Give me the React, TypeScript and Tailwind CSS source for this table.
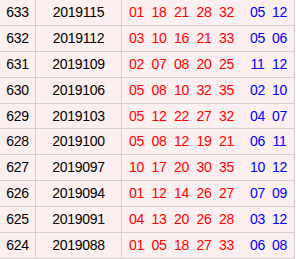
const rows: { id: string; date: string; red: string[]; blue: string[] }[] = [
  { id: '633', date: '2019115', red: ['01', '18', '21', '28', '32'], blue: ['05', '12'] },
  { id: '632', date: '2019112', red: ['03', '10', '16', '21', '33'], blue: ['05', '06'] },
  { id: '631', date: '2019109', red: ['02', '07', '08', '20', '25'], blue: ['11', '12'] },
  { id: '630', date: '2019106', red: ['05', '08', '10', '32', '35'], blue: ['02', '10'] },
  { id: '629', date: '2019103', red: ['05', '12', '22', '27', '32'], blue: ['04', '07'] },
  { id: '628', date: '2019100', red: ['05', '08', '12', '19', '21'], blue: ['06', '11'] },
  { id: '627', date: '2019097', red: ['10', '17', '20', '30', '35'], blue: ['10', '12'] },
  { id: '626', date: '2019094', red: ['01', '12', '14', '26', '27'], blue: ['07', '09'] },
  { id: '625', date: '2019091', red: ['04', '13', '20', '26', '28'], blue: ['03', '12'] },
  { id: '624', date: '2019088', red: ['01', '05', '18', '27', '33'], blue: ['06', '08'] },
];

function Ball({ n, blue }: { n: string; blue?: boolean }) {
  return (
    <span className={`inline-block w-[15px] text-center ${blue ? 'text-[#0000ff]' : 'text-[#ff0000]'}`}>{n}</span>
  );
}

export default function App() {
  return (
    <div className="w-[296px] h-[259px] overflow-hidden bg-white">
      <div
        className="w-[295px] bg-[#fcefef] text-[14px] tracking-[-0.28px] text-black"
        style={{ fontFamily: '"Liberation Sans", Arial, sans-serif' }}
      >
        {rows.map((r) => (
          <div key={r.id} className="flex h-[25.9px] border-b border-[#d3cfcf]">
            <div className="w-[36px] flex items-center justify-center border-r border-[#d3cfcf]">{r.id}</div>
            <div className="w-[86px] flex items-center justify-center border-r border-[#d3cfcf]">{r.date}</div>
            <div className="w-[173px] flex items-center justify-center border-r border-[#d3cfcf]">
              <div className="flex gap-[7.5px]">
                {r.red.map((n, i) => (
                  <Ball key={i} n={n} />
                ))}
              </div>
              <div className="flex gap-[7px] ml-[16px]">
                {r.blue.map((n, i) => (
                  <Ball key={i} n={n} blue />
                ))}
              </div>
            </div>
          </div>
        ))}
      </div>
    </div>
  );
}
